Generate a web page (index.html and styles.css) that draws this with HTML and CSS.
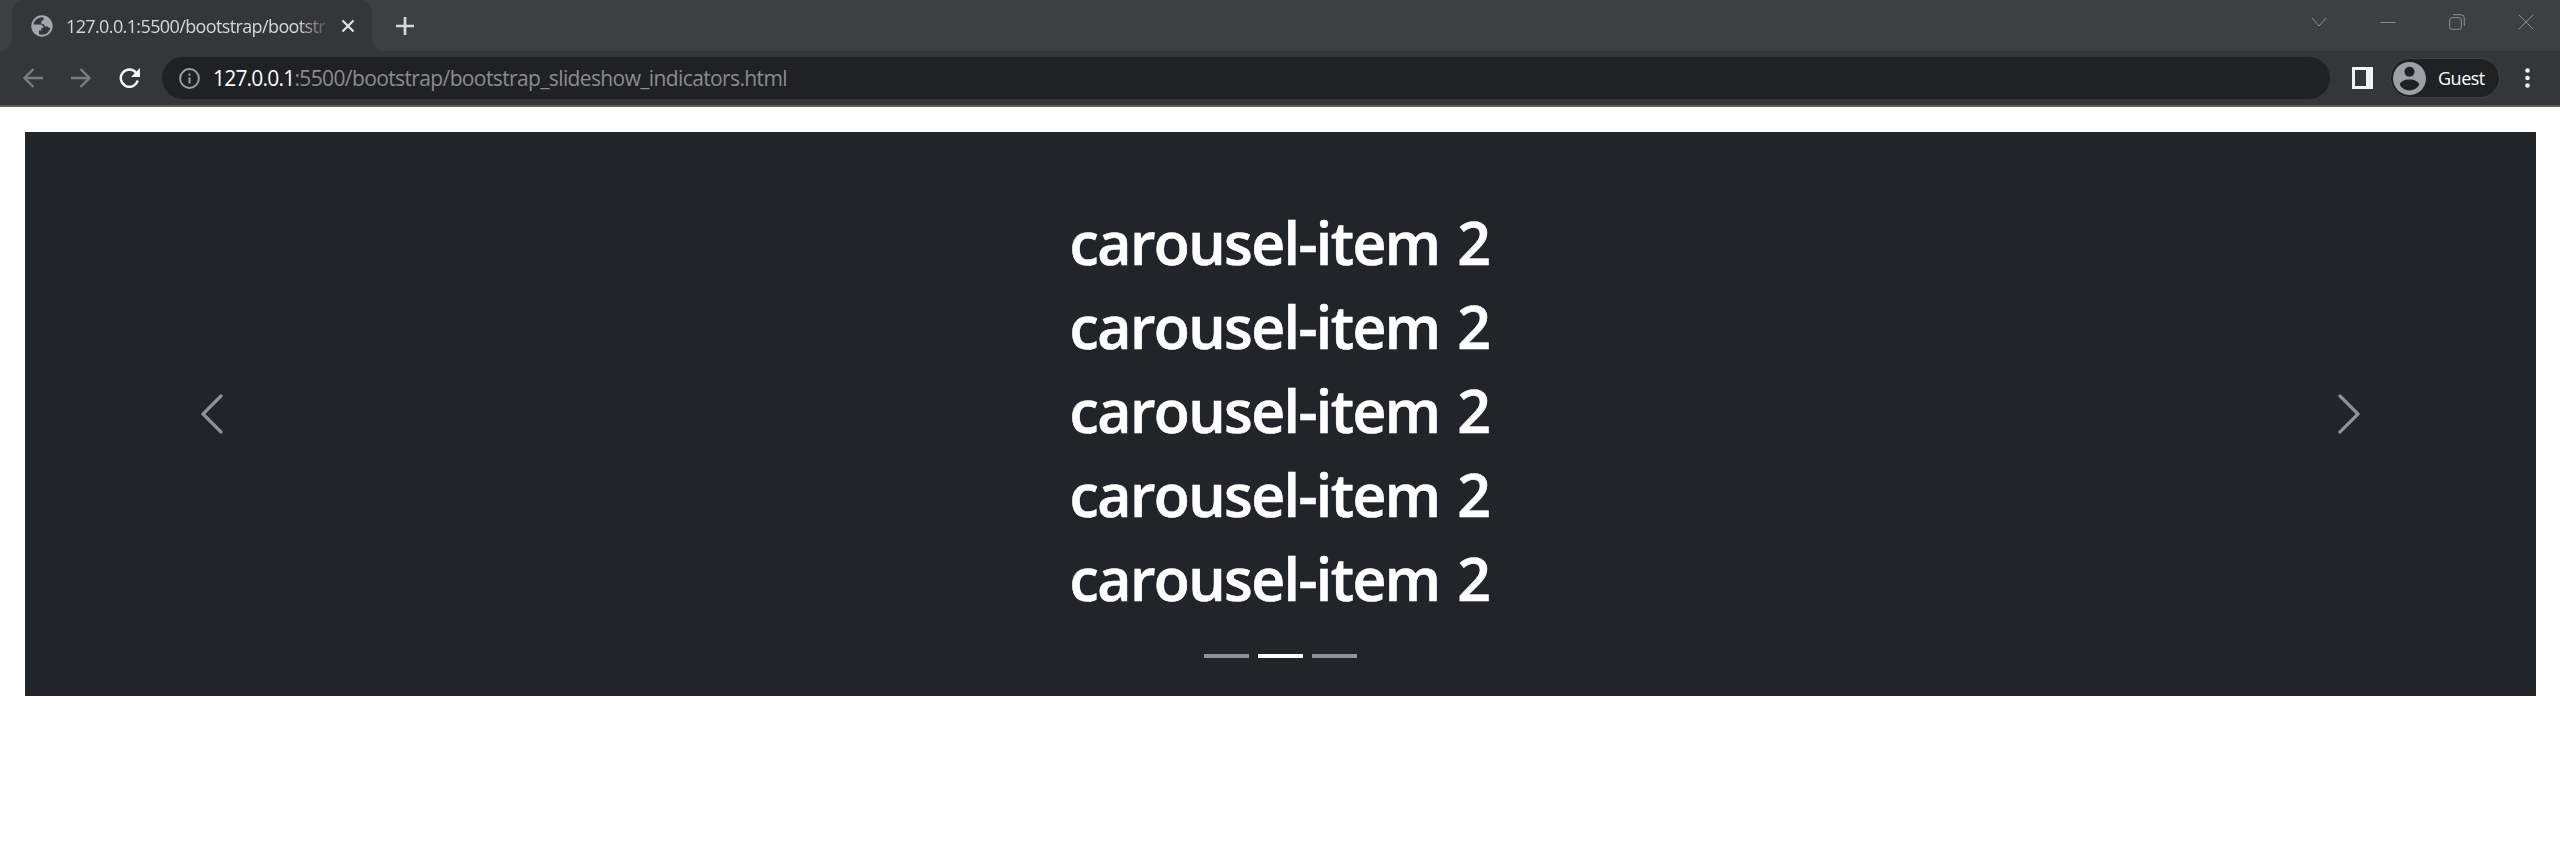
FILE: index.html
```html
<!DOCTYPE html>
<html lang="en">
<head>
<meta charset="utf-8">
<title>127.0.0.1:5500/bootstrap/bootstrap_slideshow_indicators.html</title>
<link rel="stylesheet" href="styles.css">
</head>
<body>
<header class="browser">
  <div class="tabstrip">
    <div class="strip-edge"></div>
    <div class="tab">
      <svg class="globe" viewBox="0 0 22 22"><circle cx="11" cy="11" r="9.700" fill="none" stroke="#a3a6aa" stroke-width="2"/><path fill="#a3a6aa" d="M1 9.500h7.500q3.800 0 4 3.600h-2.200v2.300H8v5.300C4 19.500 1 16.500 1 11.500zM12.500 1C17 1.500 21 6 21 11.500l-1.500 1.300c-1.300.4-2.300-.2-2.700-1.300h-2.600l-1.400-2.200H10.300V6.300l2.200-1.400z"/></svg>
      <span class="tab-title">127.0.0.1:5500/bootstrap/bootstr</span>
      <svg class="tab-close" viewBox="0 0 14 14"><path d="M1.500 1.500l11 11M12.500 1.500l-11 11"/></svg>
    </div>
    <div class="strip-rest">
      <svg class="new-tab" viewBox="0 0 18 18"><path d="M9 0v18M0 9h18"/></svg>
      <div class="window-buttons">
        <svg viewBox="0 0 16 16"><path d="M1 4l7 8 7-8"/></svg>
        <svg viewBox="0 0 16 16"><path d="M.5 8.500h15"/></svg>
        <svg viewBox="0 0 16 16"><rect x=".7" y="3.700" width="11.600" height="11.600" rx="2"/><path d="M4 .7h8q3.300 0 3.300 3.300v8"/></svg>
        <svg viewBox="0 0 16 16"><path d="M.7.7l14.600 14.600M15.300.7.7 15.300"/></svg>
      </div>
    </div>
  </div>
  <div class="toolbar">
    <svg class="nav-icon" viewBox="0 0 20 20"><path d="M20 10H1.500M10.500 1l-9 9 9 9"/></svg>
    <svg class="nav-icon" viewBox="0 0 20 20"><path d="M0 10h18.500M9.500 1l9 9-9 9"/></svg>
    <svg class="reload" viewBox="0 0 22 20"><path fill="none" stroke="#f1f3f4" stroke-width="2.500" d="M17.200 4.900A8.600 8.600 0 1 0 18.700 12.500"/><path fill="#f1f3f4" d="M21 0v9h-9z"/></svg>
    <div class="omnibox">
      <svg class="info" viewBox="0 0 21 21"><circle cx="10.500" cy="10.500" r="9.400"/><path d="M10.500 9.400v6M10.500 5.400v2.300"/></svg>
      <span class="url"><span class="host">127.0.0.1</span><span class="path">:5500/bootstrap/bootstrap_slideshow_indicators.html</span></span>
    </div>
    <svg class="panel" viewBox="0 0 21 22"><path fill="#f1f3f4" fill-rule="evenodd" d="M0 0h21v22H0zM3 3v16h11V3z"/></svg>
    <div class="profile">
      <svg class="avatar" viewBox="0 0 33 33"><circle cx="16.500" cy="16.500" r="16.500" fill="#9aa0a6"/><circle cx="16.500" cy="9.800" r="5" fill="#202124"/><path fill="#202124" d="M6.800 23c0-3.500 5-5.500 9.700-5.500s9.700 2 9.700 5.500c-2 3.300-5.500 5.500-9.700 5.500S8.800 26.300 6.800 23z"/></svg>
      <span class="profile-name">Guest</span>
    </div>
    <svg class="menu" viewBox="0 0 5 20"><circle cx="2.500" cy="2.500" r="2.300"/><circle cx="2.500" cy="10" r="2.300"/><circle cx="2.500" cy="17.500" r="2.300"/></svg>
  </div>
</header>
<main class="page">
  <section class="carousel">
    <button class="control" aria-label="Previous"><svg viewBox="0 0 16 16"><path d="M11.354 1.646a.5.5 0 0 1 0 .708L5.707 8l5.647 5.646a.5.5 0 0 1-.708.708l-6-6a.5.5 0 0 1 0-.708l6-6a.5.5 0 0 1 .708 0z"/></svg></button>
    <div class="slide">
      <h1 class="lines">carousel-item 2<br>carousel-item 2<br>carousel-item 2<br>carousel-item 2<br>carousel-item 2</h1>
      <div class="indicators"><span class="dot"></span><span class="dot active"></span><span class="dot"></span></div>
    </div>
    <button class="control next" aria-label="Next"><svg viewBox="0 0 16 16"><path d="M4.646 1.646a.5.5 0 0 1 .708 0l6 6a.5.5 0 0 1 0 .708l-6 6a.5.5 0 0 1-.708-.708L10.293 8 4.646 2.354a.5.5 0 0 1 0-.708z"/></svg></button>
  </section>
</main>
</body>
</html>
```
FILE: styles.css
```css
* { box-sizing: border-box; }
body {
  margin: 0;
  background: #fff;
  font-family: "Open Sans", "Noto Sans", sans-serif;
}
svg { display: block; flex: none; }

.browser { height: 107px; background: #35363a; border-bottom: 2px solid #5b5b60; }
.tabstrip { display: flex; height: 51px; background: #35363a; }
.strip-edge { width: 12px; background: #3c4043; border-bottom-right-radius: 12px; }
.tab {
  display: flex;
  align-items: center;
  width: 360px;
  padding-left: 19px;
  border-radius: 12px 12px 0 0;
  background: #35363a;
  box-shadow: 0 -12px 0 #3c4043;
}
.globe { width: 22px; height: 22px; }
.tab-title {
  width: 264px;
  margin-left: 13px;
  white-space: nowrap;
  font-size: 18px;
  letter-spacing: -0.62px;
  color: #d5d7da;
  -webkit-mask-image: linear-gradient(90deg, #000 232px, transparent 266px);
  mask-image: linear-gradient(90deg, #000 232px, transparent 266px);
}
.tab-close { width: 14px; height: 14px; margin-left: 11px; stroke: #dee1e6; stroke-width: 2.2; }
.strip-rest {
  flex: 1;
  display: flex;
  align-items: center;
  padding-left: 24px;
  background: #3c4043;
  border-bottom-left-radius: 12px;
}
.new-tab { width: 18px; height: 18px; stroke: #d5d7da; stroke-width: 2.7; }
.window-buttons {
  display: flex;
  gap: 53px;
  margin: 0 26px 8px auto;
  fill: none;
  stroke: #8b8e90;
  stroke-width: 1;
}
.window-buttons svg { width: 16px; height: 16px; }

.toolbar { display: flex; align-items: center; height: 54px; padding: 0 30px 0 23px; }
.nav-icon { width: 20px; height: 20px; margin-right: 28px; fill: none; stroke: #7c7d80; stroke-width: 2.3; }
.reload { width: 22px; height: 20px; }
.omnibox {
  flex: 1;
  display: flex;
  align-items: center;
  height: 42px;
  margin-left: 21px;
  padding-left: 17px;
  border-radius: 21px;
  background: #202124;
}
.info { width: 21px; height: 21px; fill: none; stroke: #9aa0a6; stroke-width: 2; }
.url { margin-left: 13px; white-space: nowrap; font-size: 21px; letter-spacing: -0.62px; }
.host { color: #fff; letter-spacing: -0.8px; }
.path { color: #8b8c8f; }
.panel { width: 21px; height: 22px; margin-left: 22px; }
.profile {
  display: flex;
  align-items: center;
  width: 110px;
  height: 40px;
  margin-left: 17px;
  padding-left: 2px;
  border: 1px solid #3f4145;
  border-radius: 20px;
  background: #202124;
}
.avatar { width: 33px; height: 33px; }
.profile-name { margin-left: 12px; font-size: 18px; letter-spacing: -0.5px; color: #fff; }
.menu { width: 5px; height: 20px; margin-left: 25px; fill: #f1f3f4; }

.page { padding: 25px 24px 0 25px; }
.carousel { display: flex; height: 564px; background: #212529; }
.control {
  width: 15%;
  display: flex;
  align-items: center;
  justify-content: center;
  padding: 0 2px 0 0;
  border: 0;
  background: none;
}
.next { padding: 0 0 0 2px; }
.control svg { width: 48px; height: 48px; fill: #fff; opacity: .5; stroke: #fff; stroke-width: .15; }
.slide { flex: 1; display: flex; flex-direction: column; align-items: center; }
.lines {
  margin: 68px 0 0;
  padding-right: 2px;
  font-size: 59px;
  font-weight: 600;
  line-height: 84px;
  letter-spacing: -1.6px;
  word-spacing: 4px;
  -webkit-text-stroke: 0.6px #fff;
  color: #fff;
  white-space: nowrap;
}
.indicators { display: flex; gap: 9px; margin-top: 34px; }
.dot { width: 45px; height: 4px; background: #fff; opacity: .5; }
.active { opacity: 1; }
```
